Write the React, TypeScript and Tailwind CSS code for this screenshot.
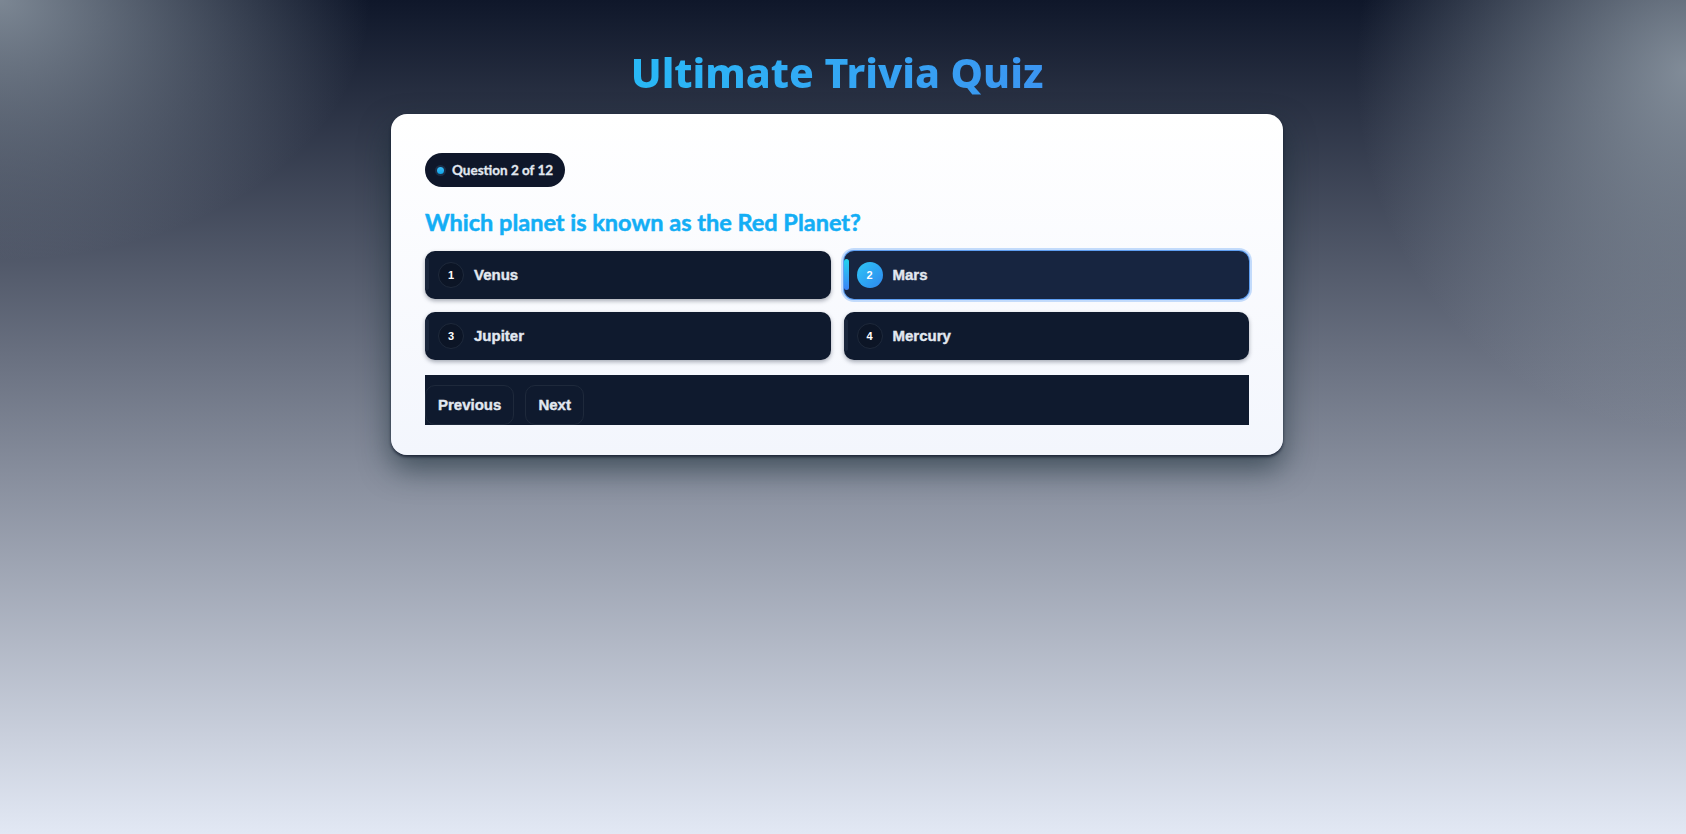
import React, { useState } from 'react';

const OPTIONS = ['Venus', 'Mars', 'Jupiter', 'Mercury'];

const App: React.FC = () => {
    const [selected, setSelected] = useState(1);

    return (
        <div className="min-h-screen w-full bg-[radial-gradient(ellipse_370px_260px_at_0_0,rgba(170,182,192,0.7),transparent),radial-gradient(ellipse_330px_360px_at_100%_70px,rgba(170,182,192,0.7),transparent),linear-gradient(to_bottom,#0f172a,#e2e8f4)]">
            <div className="flex flex-col items-center pr-3 pt-[47px] pb-10">
                <h1 className="font-['Noto_Sans',sans-serif] text-[41px] font-extrabold leading-[50px] bg-gradient-to-r from-[#28b9f6] to-[#3b95f1] bg-clip-text text-transparent">
                    Ultimate Trivia Quiz
                </h1>

                {/* quiz card */}
                <div className="mt-[17px] w-[892px] rounded-2xl bg-gradient-to-b from-white to-[#f3f6fd] px-[34px] pt-[39px] pb-[30px] shadow-[0_2px_3px_rgba(15,23,42,0.75),0_14px_30px_rgba(20,40,50,0.6)]">
                    <div className="inline-flex h-[34px] items-center gap-2 rounded-full bg-[#0f172a] px-3">
                        <span className="h-[7px] w-[7px] rounded-full bg-gradient-to-b from-[#38bdf8] to-[#0ea5e9] ring-2 ring-[#1c2e48]" />
                        <span className="font-['Lato',sans-serif] text-[13.5px] font-bold text-[#e2e8f0] [-webkit-text-stroke:0.3px_#e2e8f0]">Question 2 of 12</span>
                    </div>

                    <h2 className="mt-[19px] font-['Lato',sans-serif] text-[23.5px] font-bold leading-8 text-[#13aef5] [-webkit-text-stroke:0.5px_#13aef5]">
                        Which planet is known as the Red Planet?
                    </h2>

                    <div className="mt-[13px] grid grid-cols-2 gap-[13px]">
                        {OPTIONS.map((opt, i) => {
                            const active = i === selected;
                            return (
                                <button
                                    key={opt}
                                    onClick={() => setSelected(i)}
                                    className={
                                        active
                                            ? 'relative flex h-12 items-center gap-[10px] rounded-[10px] bg-[#172540] pl-[13px] text-left shadow-[0_0_0_1px_#5f9ff2,0_0_0_3px_#c3dbfb]'
                                            : 'relative flex h-12 items-center gap-[10px] rounded-[10px] bg-[#0f1a2e] pl-[13px] text-left shadow-[0_2px_4px_rgba(15,23,42,0.35)]'
                                    }
                                >
                                    <span
                                        className={
                                            active
                                                ? 'absolute left-0 top-[8px] bottom-[9px] w-[5px] rounded-full bg-gradient-to-b from-[#22d3ee] to-[#3b82f6]'
                                                : 'absolute left-0 top-[7px] bottom-[9px] w-[4px] rounded-full bg-[#1a263b]'
                                        }
                                    />
                                    <span
                                        className={
                                            active
                                                ? 'flex h-[26px] w-[26px] items-center justify-center rounded-full bg-gradient-to-br from-[#2fc6f5] to-[#2f86ee] font-["Liberation_Sans",sans-serif] text-[11px] font-bold text-white'
                                                : 'flex h-[26px] w-[26px] items-center justify-center rounded-full border border-[#1e293b] bg-[#0c1526] font-["Liberation_Sans",sans-serif] text-[11px] font-bold text-white'
                                        }
                                    >
                                        {i + 1}
                                    </span>
                                    <span className="font-['Liberation_Sans',sans-serif] text-[15px] font-bold text-[#e2e8f0] [-webkit-text-stroke:0.4px_#e2e8f0]">{opt}</span>
                                </button>
                            );
                        })}
                    </div>

                    {/* navigation */}
                    <div className="mt-[15px] flex h-[50px] items-end gap-[11px] bg-[#0f1a2e]">
                        <button className="h-10 rounded-[10px] border border-[#1e293b] px-3 font-['Liberation_Sans',sans-serif] text-[15px] font-bold text-[#e2e8f0] [-webkit-text-stroke:0.4px_#e2e8f0]">
                            Previous
                        </button>
                        <button className="h-10 rounded-[10px] border border-[#1e293b] px-3 font-['Liberation_Sans',sans-serif] text-[15px] font-bold text-[#e2e8f0] [-webkit-text-stroke:0.4px_#e2e8f0]">
                            Next
                        </button>
                    </div>
                </div>
            </div>
        </div>
    );
};

export default App;
